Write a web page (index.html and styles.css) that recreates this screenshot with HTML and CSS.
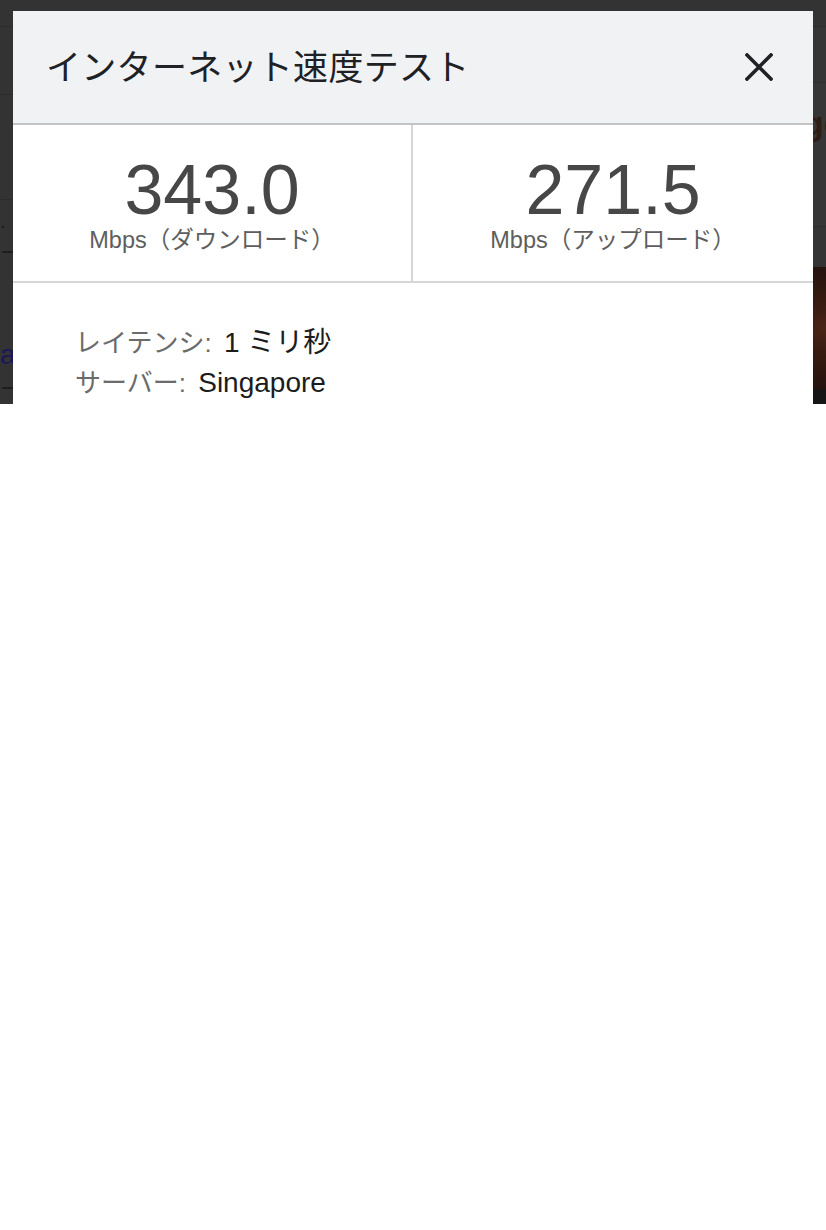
FILE: index.html
```html
<!DOCTYPE html>
<html lang="ja">
<head>
<meta charset="utf-8">
<title>インターネット速度テスト</title>
<link rel="stylesheet" href="styles.css">
</head>
<body>
<div class="screen">
  <div class="page">
    <div class="strip strip-left">
      <div class="sl sl-1"></div>
      <div class="sl sl-2"></div>
      <div class="sl sl-3"></div>
      <div class="sl sl-4"><span class="frag">.</span></div>
      <div class="sl sl-5"><span class="frag">ー</span></div>
      <div class="sl sl-6"><span class="frag link">al</span></div>
      <div class="sl sl-7"><span class="frag">ーネ</span></div>
    </div>
    <div class="middle"></div>
    <div class="strip strip-right">
      <div class="sr sr-1"></div>
      <div class="sr sr-2"></div>
      <div class="sr sr-3"><span class="frag brown">ge</span></div>
      <div class="sr sr-4"></div>
      <div class="sr sr-5"></div>
      <div class="sr sr-6"></div>
    </div>
  </div>

  <div class="dialog">
    <div class="dialog-header">
      <h1 class="dialog-title">インターネット速度テスト</h1>
      <button class="close-btn" aria-label="閉じる">
        <svg width="28" height="28" viewBox="0 0 28 28">
          <path d="M2 2 L26 26 M26 2 L2 26" stroke="#202124" stroke-width="3.6" stroke-linecap="square" fill="none"/>
        </svg>
      </button>
    </div>
    <div class="stats">
      <div class="stat stat-left">
        <div class="stat-value">343.0</div>
        <div class="stat-label">Mbps（ダウンロード）</div>
      </div>
      <div class="stat">
        <div class="stat-value">271.5</div>
        <div class="stat-label">Mbps（アップロード）</div>
      </div>
    </div>
    <div class="details">
      <div class="detail-row"><span class="detail-key">レイテンシ:</span> <span class="detail-val">1 ミリ秒</span></div>
      <div class="detail-row"><span class="detail-key">サーバー:</span> <span class="detail-val">Singapore</span></div>
    </div>
  </div>
</div>
</body>
</html>
```

FILE: styles.css
```css
* { box-sizing: border-box; }

html, body {
  margin: 0;
  padding: 0;
  background: #ffffff;
  font-family: "Liberation Sans", "Noto Sans CJK JP", sans-serif;
}

.screen {
  position: relative;
  height: 404px;
  overflow: hidden;
  background: #333333;
}

.page {
  display: flex;
  height: 404px;
}

.strip {
  width: 13px;
  display: flex;
  flex-direction: column;
  overflow: hidden;
}

.middle { flex: 1; }

.sl, .sr { overflow: hidden; white-space: nowrap; }

.frag {
  font-size: 22px;
  line-height: 26px;
  color: #1e1e1e;
  display: block;
}
.frag.link { color: #1b1858; font-size: 28px; line-height: 30px; }
.frag.brown { color: #2f1d15; font-size: 34px; line-height: 36px; margin-left: -10px; font-weight: bold; }

.sl-1 { height: 27px; border-bottom: 1px solid #2c2c2c; }
.sl-2 { height: 68px; border-bottom: 1px solid #2c2c2c; }
.sl-3 { height: 105px; border-bottom: 1px solid #2c2c2c; }
.sl-4 { height: 40px; padding-top: 8px; }
.sl-5 { height: 100px; padding-top: 0; }
.sl-6 { height: 30px; }
.sl-7 { height: 34px; padding-top: 6px; }

.sr-1 { height: 27px; border-bottom: 1px solid #2d2d2d; }
.sr-2 { height: 56px; border-bottom: 1px solid #2d2d2d; background: #353535; }
.sr-3 { height: 144px; padding-top: 22px; border-bottom: 1px solid #2d2d2d; background: #363636; }
.sr-4 { height: 40px; background: #343434; }
.sr-5 { height: 122px; background: radial-gradient(circle at 80% 50%, #4a2416 0%, #361a10 45%, #24130e 100%); }
.sr-6 { flex: 1; background: #161616; }

.dialog {
  position: absolute;
  top: 11px;
  left: 13px;
  width: 800px;
  height: 600px;
  background: #ffffff;
}

.dialog-header {
  height: 114px;
  background: #f1f2f4;
  border-bottom: 2px solid #c4c4c4;
  display: flex;
  align-items: center;
  justify-content: space-between;
  padding: 0 40px 0 33px;
}

.dialog-title {
  margin: 0;
  font-size: 35px;
  font-weight: normal;
  color: #202124;
  line-height: 40px;
  letter-spacing: 0.3px;
  padding-top: 2px;
}

.close-btn {
  border: 0;
  background: transparent;
  padding: 0;
  width: 28px;
  height: 28px;
  display: flex;
  cursor: pointer;
}

.stats {
  display: grid;
  grid-template-columns: 400px 1fr;
  height: 158px;
  border-bottom: 2px solid #d6d6d6;
}

.stat {
  display: flex;
  flex-direction: column;
  align-items: center;
  padding-top: 30px;
}

.stat-left { border-right: 2px solid #d6d6d6; }

.stat-value {
  font-size: 70px;
  line-height: 70px;
  color: #474747;
}

.stat-label {
  font-size: 23.5px;
  line-height: 26px;
  color: #5e5e5e;
  margin-top: 2px;
}

.details {
  padding: 40px 0 0 62px;
}

.detail-row {
  font-size: 26px;
  line-height: 40px;
}

.detail-key { color: #6b6b6b; }
.detail-val { color: #1c1c1c; font-size: 28px; margin-left: 5px; }
```
